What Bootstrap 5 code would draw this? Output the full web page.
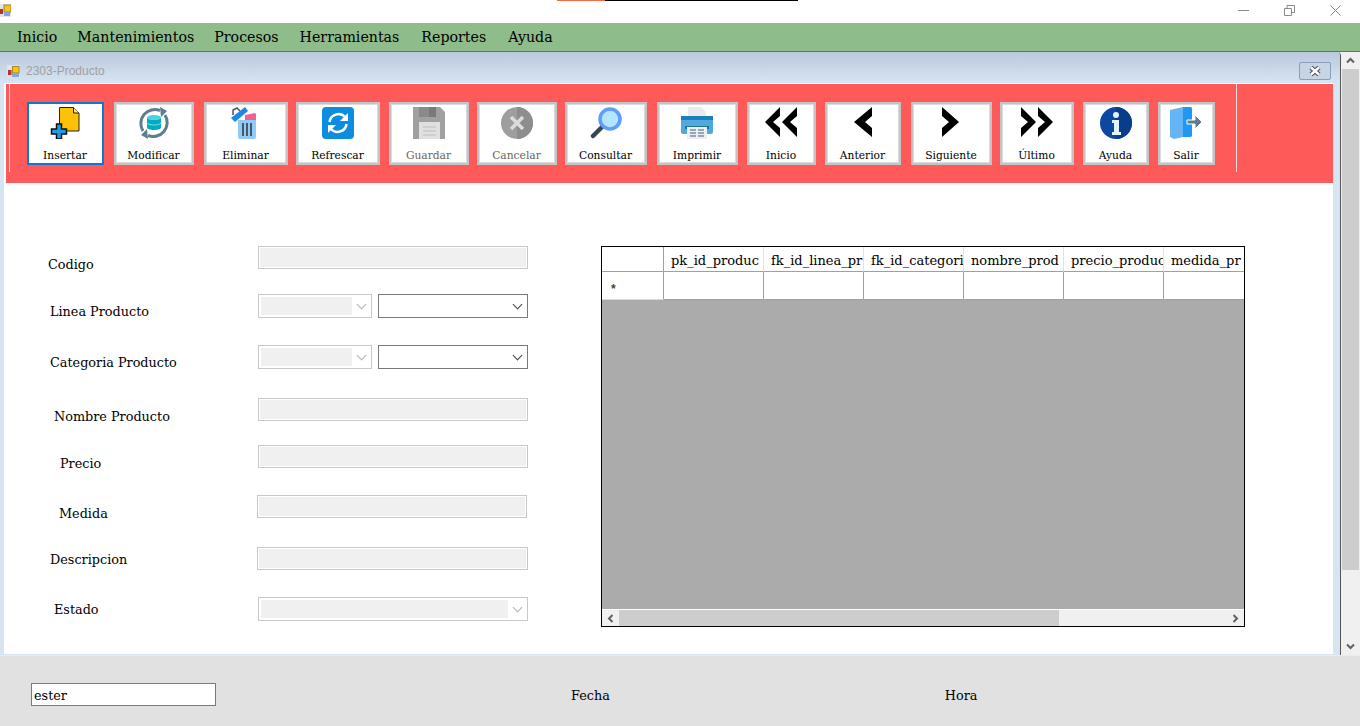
<!DOCTYPE html>
<html lang="es">
  <head>
    <meta charset="UTF-8" />
    <meta name="viewport" content="width=device-width, initial-scale=1.0" />
    <title>2303-Producto</title>
    <link
      href="https://cdn.jsdelivr.net/npm/bootstrap@5.3.0/dist/css/bootstrap.min.css"
      rel="stylesheet"
    />
    <style>
      html,
      body {
        height: 726px;
        overflow: hidden;
      }
      body {
        width: 1360px;
        background: #fff;
        color: #000;
        font-family: "DejaVu Serif", "Liberation Serif", serif;
        font-size: 12.8px;
      }

      /* barra de titulo */
      .titulo-app {
        height: 23px;
        background: #fff;
      }
      .franja-top {
        top: 0;
        left: 557px;
        width: 241px;
        height: 1px;
        background: #000;
      }
      .franja-top::before {
        content: "";
        display: block;
        width: 48px;
        height: 1px;
        background: #f56a45;
      }
      .icono-app {
        margin-top: 4px;
      }
      .ctl-grupo {
        margin-right: 2px;
        padding-top: 5px;
      }
      .ctl-ventana {
        width: 46px;
      }

      /* menu */
      .menu-app {
        height: 29px;
        background: #8fbc8b;
        border-bottom: 1px solid #6d6d6d;
        padding-left: 6.5px;
      }
      .menu-app span {
        padding: 0 10.5px;
        font-size: 14.2px;
        line-height: 28px;
      }
      .menu-app span:nth-child(1),
      .menu-app span:nth-child(2) {
        padding-right: 9.5px;
      }
      .menu-app span:nth-child(4),
      .menu-app span:nth-child(5) {
        padding-right: 11.5px;
      }

      /* area mdi */
      .area-mdi {
        height: 603px;
        background: #f0f0f0;
      }
      .hija {
        width: 1341px;
        background: #d7e4f2;
        border-right: 1px solid #555;
        border-top-right-radius: 4px;
      }
      .hija-titulo {
        height: 31px;
        padding: 7px 9px 0 7px;
        background: linear-gradient(#b9c9dc, #d7e4f2);
        border-top-right-radius: 4px;
        color: #a0a0a0;
        font-family: "Liberation Sans", sans-serif;
        font-size: 12px;
      }
      .hija-icono {
        margin-right: 6px;
      }
      .hija-cerrar {
        width: 32px;
        height: 18px;
        border: 1px solid #8d9dba;
        border-radius: 2px;
        background: #c6d4e4;
      }
      .hija-cuerpo {
        margin: 0 7px 0 4px;
        background: #fff;
      }

      /* barra de herramientas */
      .barra-roja {
        height: 100px;
        margin-left: 2px;
        padding: 18px 0 0 21px;
        background: #ff5a5a;
        border-top: 1px solid #fff;
      }
      .sep-izq,
      .sep-der {
        top: 0;
        width: 1px;
        height: 88px;
        background: #f0dcdc;
      }
      .sep-izq {
        left: 3px;
      }
      .sep-der {
        left: 1230px;
      }
      .btn-tool {
        height: 63px;
        padding: 1px 1px 0 0;
        background: #fff;
        border: 2px solid #c4c4c4;
        outline: 1px solid #dcdcdc;
        outline-offset: -3px;
        border-radius: 0;
        color: #000;
        font-size: 10.7px;
        line-height: 13px;
        flex: none;
      }
      .btn-tool svg {
        display: block;
        margin: 0 auto 10px;
      }
      .btn-tool:disabled {
        opacity: 1;
        background: #fff;
        color: #666;
        border-color: #c4c4c4;
      }
      .btn-tool.activo {
        border-color: #0f76d2;
        outline: none;
      }
      .t1 { width: 77px; }
      .t2 { width: 80px; margin-left: 10px; }
      .t3 { width: 84px; margin-left: 10px; }
      .t4 { width: 84px; margin-left: 8px; }
      .t5 { width: 80px; margin-left: 9px; }
      .t6 { width: 80px; margin-left: 8px; }
      .t7 { width: 82px; margin-left: 8px; }
      .t8 { width: 81px; margin-left: 10px; }
      .t9 { width: 69px; margin-left: 9px; }
      .t10 { width: 76px; margin-left: 9px; }
      .t11 { width: 81px; margin-left: 10px; }
      .t12 { width: 74px; margin-left: 8px; }
      .t13 { width: 66px; margin-left: 9px; }
      .t14 { width: 57px; margin-left: 9px; }

      /* formulario */
      .contenido {
        height: 471px;
      }
      .col-form {
        width: 597px;
        flex: none;
        padding-top: 63px;
      }
      .fila {
        height: 23px;
      }
      .fila label {
        width: 254px;
        flex: none;
        line-height: 16px;
        white-space: nowrap;
      }
      .caja {
        width: 270px;
        height: 23px;
        border: 1px solid #c8c8c8;
        padding: 1px;
        background-color: #fff;
        background-clip: content-box;
        background-image: linear-gradient(#f0f0f0, #f0f0f0);
      }
      .caja-ancha {
        width: 271px;
      }
      .combo {
        display: flex;
        height: 24px;
        border: 1px solid #c8c8c8;
        background: #fff;
      }
      .combo::after {
        content: "";
        margin: auto 6px auto auto;
        width: 7px;
        height: 7px;
        border-right: 1px solid #b4b4b4;
        border-bottom: 1px solid #b4b4b4;
        transform: translateY(-2px) rotate(45deg);
      }
      .combo-off::before {
        content: "";
        margin: 2px;
        width: 91px;
        background: #f0f0f0;
      }
      .combo-on {
        border-color: #7a7a7a;
        margin-left: 6px;
        width: 150px;
      }
      .combo-on::after {
        border-color: #444;
      }
      .combo-corto {
        width: 114px;
      }
      .combo-largo {
        width: 270px;
      }
      .combo-largo::before {
        width: 247px;
      }
      .f1 label { padding: 11px 0 0 44px; }
      .f2 { margin-top: 25px; }
      .f2 label { padding: 10px 0 0 46px; }
      .f3 { margin-top: 28px; }
      .f3 label { padding: 10px 0 0 46px; }
      .f4 { margin-top: 30px; }
      .f4 label { padding: 11px 0 0 50px; }
      .f5 { margin-top: 24px; }
      .f5 label { padding: 11px 0 0 56px; }
      .f6 { margin-top: 27px; margin-left: -1px; }
      .f6 label { padding: 11px 0 0 56px; }
      .f7 { margin-top: 29px; margin-left: -1px; }
      .f7 label { padding: 5px 0 0 47px; }
      .f8 { margin-top: 27px; }
      .f8 label { padding: 5px 0 0 50px; }

      /* grilla */
      .grilla {
        width: 644px;
        height: 381px;
        margin-top: 63px;
        background: #ababab;
        border: 1px solid #000;
        overflow: hidden;
        flex: none;
      }
      .grilla-filas {
        height: 362px;
      }
      .gcol {
        width: 100px;
        flex: none;
        border-right: 1px solid #a0a0a0;
        background: #fff;
        overflow: hidden;
        white-space: nowrap;
        padding-left: 7px;
        font-size: 13px;
      }
      .gcab {
        height: 25px;
        line-height: 27px;
        border-bottom: 1px solid #a0a0a0;
        border-right-color: #e2e2e2;
      }
      .gcel {
        height: 28px;
        border-bottom: 1px solid #a0a0a0;
      }
      .gcol-ini {
        width: 62px;
        padding-left: 0;
        border-right-color: #a0a0a0;
      }
      .asterisco {
        padding-left: 9px;
        line-height: 34px;
        border-bottom-color: #dcdcdc;
        color: #444;
        font-family: "Liberation Sans", sans-serif;
        font-size: 12px;
        font-weight: 700;
      }
      .grilla-scroll {
        height: 18px;
        background: #f0f0f0;
        border-top: 1px solid #fff;
      }
      .grilla-thumb {
        width: 440px;
        height: 100%;
        margin: 0 auto 0 0;
        background: #cdcdcd;
      }
      .flecha {
        width: 17px;
        flex: none;
      }

      /* scroll vertical */
      .vscroll {
        width: 17px;
        margin-left: 1px;
        background: #f0f0f0;
      }
      .vscroll-flecha {
        height: 17px;
      }
      .vscroll-thumb {
        height: 501px;
        background: #cdcdcd;
      }

      /* pie */
      .pie {
        height: 71px;
        padding-top: 27px;
        background: #e1e1e1;
        border-top: 1px solid #ececec;
      }
      .pie-usuario {
        width: 185px;
        height: 23px;
        margin-left: 31px;
        padding-left: 2px;
        background: #fff;
        border: 1px solid #7a7a7a;
        line-height: 23px;
      }
      .pie-fecha,
      .pie-hora {
        line-height: 25px;
      }
      .pie-fecha {
        margin-left: 355px;
      }
      .pie-hora {
        margin-left: 335px;
      }
    </style>
  </head>
  <body>
    <!-- Barra de titulo -->
    <div class="titulo-app position-relative d-flex align-items-start">
      <svg class="icono-app" width="11" height="13" viewBox="0 0 11 13">
        <rect x="0" y="0" width="11" height="13" fill="#e4e4e4" />
        <rect x="4" y="1" width="7" height="7" fill="#f5c518" stroke="#a8842a" />
        <rect x="0" y="5" width="3" height="5" fill="#b5342a" />
        <rect x="4" y="8" width="6" height="4" fill="#7fa8e0" />
      </svg>
      <div class="franja-top position-absolute"></div>
      <div class="ctl-grupo ms-auto d-flex">
        <div class="ctl-ventana d-flex justify-content-center">
          <svg width="11" height="11" viewBox="0 0 11 11"><path d="M0 5.500h11" stroke="#8a8a8a" /></svg>
        </div>
        <div class="ctl-ventana d-flex justify-content-center">
          <svg width="11" height="11" viewBox="0 0 11 11" fill="none" stroke="#8a8a8a"><path d="M.5 3.500h7v7h-7zM3 3.500v-3h7.500v7H7.500" /></svg>
        </div>
        <div class="ctl-ventana d-flex justify-content-center">
          <svg width="11" height="11" viewBox="0 0 11 11"><path d="M.5.5l10 10M10.500.5l-10 10" stroke="#8a8a8a" /></svg>
        </div>
      </div>
    </div>

    <!-- Menu -->
    <div class="menu-app d-flex">
      <span>Inicio</span>
      <span>Mantenimientos</span>
      <span>Procesos</span>
      <span>Herramientas</span>
      <span>Reportes</span>
      <span>Ayuda</span>
    </div>

    <div class="area-mdi d-flex">
      <div class="hija">
        <div class="hija-titulo d-flex align-items-center">
          <svg class="hija-icono" width="13" height="13" viewBox="0 0 13 13">
            <rect width="13" height="13" fill="#dfe3e8" />
            <rect x="5.500" y="1.500" width="6.500" height="6.500" fill="#f5c518" stroke="#a8842a" />
            <rect x="1" y="5" width="3.500" height="5" fill="#b5342a" />
            <rect x="5" y="8" width="7" height="4" fill="#7fa8e0" />
          </svg>
          <span>2303-Producto</span>
          <div class="hija-cerrar ms-auto d-flex align-items-center justify-content-center">
            <svg width="14" height="12" viewBox="0 0 14 12">
              <path d="M3 2.500l8 7M11 2.500l-8 7" stroke="#4a4a4a" stroke-width="4.500" />
              <path d="M3 2.500l8 7M11 2.500l-8 7" stroke="#fff" stroke-width="2.500" />
            </svg>
          </div>
        </div>

        <div class="hija-cuerpo">
          <!-- Barra de herramientas -->
          <div class="barra-roja position-relative d-flex align-items-start">
            <div class="sep-izq position-absolute"></div>
            <div class="sep-der position-absolute"></div>

            <button class="btn btn-tool activo t1">
              <svg width="32" height="32" viewBox="0 0 32 32">
                <path d="M10.500.5h14l5.500 5.500v18h-19.500z" fill="#ffc107" stroke="#222" />
                <path d="M24.500.5v5.500h5.500" fill="#ffe082" stroke="#222" />
                <path d="M7.500 17h5v5h5v5h-5v5h-5v-5h-5v-5h5z" fill="#1e9be8" stroke="#111" stroke-width="1.500" />
              </svg>
              Insertar
            </button>

            <button class="btn btn-tool t2">
              <svg width="32" height="32" viewBox="0 0 32 32">
                <path d="M5 24A14 14 0 0 1 22 3.500" fill="none" stroke="#607d8b" stroke-width="3" />
                <path d="M27 8A14 14 0 0 1 10 28.500" fill="none" stroke="#607d8b" stroke-width="3" />
                <path d="M22 0l7 4-6 6zM10 32l-7-4 6-6z" fill="#607d8b" />
                <ellipse cx="16" cy="10.500" rx="7" ry="2.500" fill="#4dd0e1" />
                <path d="M9 10.500v10c0 1.500 3 2.500 7 2.500s7-1 7-2.500v-10c0 1.500-3 2.500-7 2.500s-7-1-7-2.500z" fill="#00acc1" />
                <path d="M9 15.500c0 1.500 3 2.500 7 2.500s7-1 7-2.500" fill="none" stroke="#80deea" />
              </svg>
              Modificar
            </button>

            <button class="btn btn-tool t3">
              <svg width="32" height="32" viewBox="0 0 32 32">
                <path d="M8 13h18v17a2 2 0 0 1-2 2H10a2 2 0 0 1-2-2z" fill="#90caf9" />
                <path d="M13 16v13M17 16v13M21 16v13" stroke="#455a64" stroke-width="2" />
                <path d="M15 8l10-2 1 1v6H15z" fill="#f06292" />
                <path d="M1 11L15 0l3 4L5 15z" fill="#1e88e5" />
                <path d="M3 8V3l4-2 3 3" fill="none" stroke="#455a64" stroke-width="1.500" />
              </svg>
              Eliminar
            </button>

            <button class="btn btn-tool t4">
              <svg width="32" height="32" viewBox="0 0 32 32">
                <rect width="32" height="32" rx="4" fill="#0d8de0" />
                <path d="M7.500 15A9 9 0 0 1 23 10" fill="none" stroke="#fff" stroke-width="2.500" />
                <path d="M24.500 17A9 9 0 0 1 9 22" fill="none" stroke="#fff" stroke-width="2.500" />
                <path d="M26 6v8h-8zM6 26v-8h8z" fill="#fff" />
              </svg>
              Refrescar
            </button>

            <button class="btn btn-tool t5" disabled>
              <svg width="32" height="32" viewBox="0 0 32 32">
                <path d="M0 0h27l5 5v27H0z" fill="#a0a0a0" />
                <rect x="6" y="0" width="17" height="10" fill="#8a8a8a" />
                <rect x="16" y="0" width="7" height="10" fill="#7a7a7a" />
                <rect x="6" y="15" width="21" height="17" fill="#e0e0e0" />
                <path d="M10 20h13M10 24h13M10 28h13" stroke="#bdbdbd" />
              </svg>
              Guardar
            </button>

            <button class="btn btn-tool t6" disabled>
              <svg width="32" height="32" viewBox="0 0 32 32">
                <circle cx="16" cy="16" r="16" fill="#9e9e9e" />
                <path d="M16 0a16 16 0 0 1 0 32z" fill="#8d8d8d" />
                <path d="M10 10l12 12M22 10L10 22" stroke="#dcdcdc" stroke-width="3.500" />
              </svg>
              Cancelar
            </button>

            <button class="btn btn-tool t7">
              <svg width="32" height="32" viewBox="0 0 32 32">
                <path d="M3 29l9-9" stroke="#37474f" stroke-width="4.500" stroke-linecap="round" />
                <circle cx="20" cy="12" r="10" fill="#b3e5fc" stroke="#5c9dff" stroke-width="3.500" />
              </svg>
              Consultar
            </button>

            <button class="btn btn-tool t8">
              <svg width="32" height="32" viewBox="0 0 32 32">
                <path d="M7 0h13l5 5v5H7z" fill="#e8eaed" />
                <rect y="9" width="32" height="18" rx="2" fill="#4fa9dc" />
                <rect y="9" width="32" height="4" fill="#1e7fb8" />
                <rect x="4" y="19" width="24" height="3" fill="#2a6f98" />
                <rect x="6" y="20" width="20" height="12" fill="#eceff1" />
                <path d="M9 23h6M17 23h6M9 26h6M17 26h6M9 29h6M17 29h6" stroke="#78909c" stroke-width="1.500" />
              </svg>
              Imprimir
            </button>

            <button class="btn btn-tool t9">
              <svg width="32" height="32" viewBox="0 0 32 32">
                <path d="M15 0v9l-7 6 7 6v9L0 15zM32 0v9l-7 6 7 6v9L17 15z" fill="#000" />
              </svg>
              Inicio
            </button>

            <button class="btn btn-tool t10">
              <svg width="32" height="32" viewBox="0 0 32 32">
                <path d="M25 0v9l-7 6 7 6v9L7 15z" fill="#000" />
              </svg>
              Anterior
            </button>

            <button class="btn btn-tool t11">
              <svg width="32" height="32" viewBox="0 0 32 32">
                <path d="M7 0v9l7 6-7 6v9l17-15z" fill="#000" />
              </svg>
              Siguiente
            </button>

            <button class="btn btn-tool t12">
              <svg width="32" height="32" viewBox="0 0 32 32">
                <path d="M0 0v9l7 6-7 6v9l15-15zM17 0v9l7 6-7 6v9l15-15z" fill="#000" />
              </svg>
              Último
            </button>

            <button class="btn btn-tool t13">
              <svg width="32" height="32" viewBox="0 0 32 32">
                <circle cx="16" cy="16" r="16" fill="#0d47a1" />
                <path d="M16 0a16 16 0 0 1 0 32z" fill="#083d8c" />
                <circle cx="16" cy="8" r="3" fill="#e3f2fd" />
                <path d="M12 13h7v12h2v3H12v-3h2v-9h-2z" fill="#e3f2fd" />
              </svg>
              Ayuda
            </button>

            <button class="btn btn-tool t14">
              <svg width="32" height="32" viewBox="0 0 32 32">
                <path d="M0 3l13-3h7a2 2 0 0 1 2 2v26a2 2 0 0 1-2 2h-7L4 32l-4-2z" fill="#64b5f6" />
                <path d="M13 0h7a2 2 0 0 1 2 2v26a2 2 0 0 1-2 2h-7z" fill="#2196f3" />
                <path d="M17 13h8V8l7 7-7 7v-5h-8z" fill="#607d8b" stroke="#fff" />
              </svg>
              Salir
            </button>
          </div>

          <!-- Formulario y grilla -->
          <div class="contenido d-flex">
            <div class="col-form">
              <div class="fila f1 d-flex">
                <label>Codigo</label>
                <div class="caja"></div>
              </div>
              <div class="fila f2 d-flex">
                <label>Linea Producto</label>
                <div class="combo combo-off combo-corto"></div>
                <div class="combo combo-on"></div>
              </div>
              <div class="fila f3 d-flex">
                <label>Categoria Producto</label>
                <div class="combo combo-off combo-corto"></div>
                <div class="combo combo-on"></div>
              </div>
              <div class="fila f4 d-flex">
                <label>Nombre Producto</label>
                <div class="caja"></div>
              </div>
              <div class="fila f5 d-flex">
                <label>Precio</label>
                <div class="caja"></div>
              </div>
              <div class="fila f6 d-flex">
                <label>Medida</label>
                <div class="caja"></div>
              </div>
              <div class="fila f7 d-flex">
                <label>Descripcion</label>
                <div class="caja caja-ancha"></div>
              </div>
              <div class="fila f8 d-flex">
                <label>Estado</label>
                <div class="combo combo-off combo-largo"></div>
              </div>
            </div>

            <div class="grilla">
              <div class="grilla-filas d-flex">
                <div>
                  <div class="gcol gcol-ini gcab"></div>
                  <div class="gcol gcol-ini gcel asterisco">*</div>
                </div>
                <div>
                  <div class="gcol gcab">pk_id_produc</div>
                  <div class="gcol gcel"></div>
                </div>
                <div>
                  <div class="gcol gcab">fk_id_linea_pr</div>
                  <div class="gcol gcel"></div>
                </div>
                <div>
                  <div class="gcol gcab">fk_id_categori</div>
                  <div class="gcol gcel"></div>
                </div>
                <div>
                  <div class="gcol gcab">nombre_prod</div>
                  <div class="gcol gcel"></div>
                </div>
                <div>
                  <div class="gcol gcab">precio_produc</div>
                  <div class="gcol gcel"></div>
                </div>
                <div>
                  <div class="gcol gcab">medida_pr</div>
                  <div class="gcol gcel"></div>
                </div>
              </div>
              <div class="grilla-scroll d-flex align-items-center">
                <div class="flecha d-flex justify-content-center">
                  <svg width="7" height="9" viewBox="0 0 7 9"><path d="M5.500 1l-3.500 3.500 3.500 3.500" fill="none" stroke="#606060" stroke-width="2" /></svg>
                </div>
                <div class="grilla-thumb"></div>
                <div class="flecha d-flex justify-content-center">
                  <svg width="7" height="9" viewBox="0 0 7 9"><path d="M1.500 1l3.500 3.500-3.500 3.500" fill="none" stroke="#606060" stroke-width="2" /></svg>
                </div>
              </div>
            </div>
          </div>
        </div>
      </div>

      <!-- Scroll vertical -->
      <div class="vscroll d-flex flex-column">
        <div class="vscroll-flecha d-flex align-items-center justify-content-center">
          <svg width="9" height="7" viewBox="0 0 9 7"><path d="M1 5.500l3.500-3.500 3.500 3.500" fill="none" stroke="#606060" stroke-width="2" /></svg>
        </div>
        <div class="vscroll-thumb"></div>
        <div class="vscroll-flecha mt-auto d-flex align-items-center justify-content-center">
          <svg width="9" height="7" viewBox="0 0 9 7"><path d="M1 1.500l3.500 3.500 3.500-3.500" fill="none" stroke="#606060" stroke-width="2" /></svg>
        </div>
      </div>
    </div>

    <!-- Pie -->
    <div class="pie d-flex align-items-start">
      <div class="pie-usuario">ester</div>
      <span class="pie-fecha">Fecha</span>
      <span class="pie-hora">Hora</span>
    </div>

    <script src="https://cdn.jsdelivr.net/npm/bootstrap@5.3.0/dist/js/bootstrap.bundle.min.js"></script>
  </body>
</html>
